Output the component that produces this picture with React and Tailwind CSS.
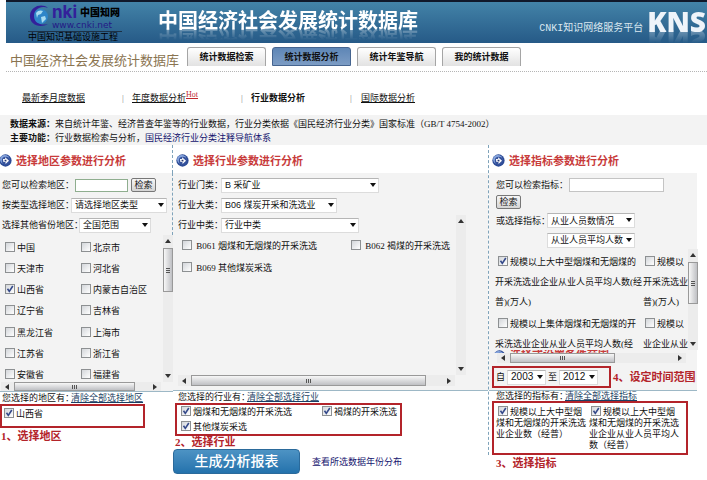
import React, { useState } from "react";

const regions = ["中国", "北京市", "天津市", "河北省", "山西省", "内蒙古自治区", "辽宁省", "吉林省", "黑龙江省", "上海市", "江苏省", "浙江省", "安徽省", "福建省"];

const tabs = ["统计数据检索", "统计数据分析", "统计年鉴导航", "我的统计数据"];

function Check({ label, checked = false, className = "" }) {
  const [on, setOn] = useState(checked);
  return (
    <label className={`whitespace-nowrap ${className}`}>
      <Box on={on} setOn={setOn} />
      {label}
    </label>
  );
}

function Box({ on, setOn }) {
  return (
    <span className="relative mr-[2px] inline-block size-[10px] align-[-1px]">
      <input
        type="checkbox"
        checked={on}
        onChange={() => setOn(!on)}
        className="block size-[10px] appearance-none border border-[#8d9092] bg-linear-to-br from-[#d3d6da] to-white"
      />
      {on && (
        <svg viewBox="0 0 10 10" className="pointer-events-none absolute inset-0 size-[10px]">
          <path d="M2.5 4.8 4.3 7.4 7.8 2" fill="none" stroke="#34498a" strokeWidth="1.6" />
        </svg>
      )}
    </span>
  );
}

// checkbox whose label wraps under the box
function WrapCheck({ label, checked = false, className = "" }) {
  const [on, setOn] = useState(checked);
  return (
    <label className={`block break-all ${className}`}>
      <Box on={on} setOn={setOn} />
      {label}
    </label>
  );
}

function Select({ label, options, className = "" }) {
  return (
    <span className={`relative inline-block h-[15px] ${className}`}>
      <select
        aria-label={label}
        className="block h-full w-full appearance-none border border-[#dcdcdc] border-t-[#b5b5b5] bg-white pl-[3px] font-['Liberation_Sans','Noto_Sans_CJK_SC',sans-serif] leading-[12px]"
      >
        {options.map((o) => (
          <option key={o}>{o}</option>
        ))}
      </select>
      <svg viewBox="0 0 6 4" className="pointer-events-none absolute top-[5px] right-[3px] h-1 w-[6px]">
        <path d="M0 0h6L3 4z" fill="#111" />
      </svg>
    </span>
  );
}

function Arrow({ d }) {
  return (
    <svg viewBox="0 0 6 6" className="size-[6px] shrink-0">
      <path d={d} fill="#333" />
    </svg>
  );
}

function VScroll({ thumb = "" }) {
  return (
    <div className="flex w-[10px] shrink-0 flex-col items-center bg-[#ececec] py-[3px]">
      <Arrow d="M3 1 6 5H0z" />
      {thumb && (
        <div className={`mt-1 flex w-[10px] flex-col items-center justify-center gap-px border border-[#999] bg-linear-to-r from-[#f7f7f7] to-[#bfc0c4] ${thumb}`}>
          <i className="h-px w-1 bg-[#555]" />
          <i className="h-px w-1 bg-[#555]" />
          <i className="h-px w-1 bg-[#555]" />
        </div>
      )}
      <div className="flex-1" />
      <Arrow d="M3 5 6 1H0z" />
    </div>
  );
}

function HScroll({ thumb, className = "" }) {
  return (
    <div className={`flex items-center bg-[#ececec] px-[3px] ${className}`}>
      <Arrow d="M1 3 5 0V6z" />
      <div className={`ml-1 flex h-full items-center justify-center gap-px border border-[#999] bg-linear-to-b from-[#f7f7f7] to-[#bfc0c4] ${thumb}`}>
        <i className="h-1 w-px bg-[#555]" />
        <i className="h-1 w-px bg-[#555]" />
        <i className="h-1 w-px bg-[#555]" />
      </div>
      <div className="flex-1" />
      <Arrow d="M5 3 1 0V6z" />
    </div>
  );
}

function Heading({ children }) {
  return (
    <h2 className="flex h-7 items-center gap-1 bg-white pt-[3px] pl-[3px] text-[11px] font-bold whitespace-nowrap text-[#c83b3b]">
      <Disc />
      {children}
    </h2>
  );
}

function Disc() {
  return (
    <svg viewBox="0 0 14 14" className="size-[13px] shrink-0">
      <circle cx="7" cy="7" r="6.6" fill="#2c4b96" />
      <circle cx="6.2" cy="6" r="5" fill="#86a4dc" />
      <circle cx="7.4" cy="7.4" r="4.4" fill="#35529c" />
      <path d="M4.2 5.4h2.4V3.4L10.8 7.2 7 10.8V8.6H4.8z" fill="#fff" />
      <path d="M6 6.2h2v1.8H6z" fill="#24366f" />
    </svg>
  );
}

function Button({ children }) {
  return (
    <button className="h-[14px] w-[25px] shrink-0 rounded-[2px] border border-[#777] bg-linear-to-b from-[#f6f6f6] to-[#d4d4d4] leading-[11px]">
      {children}
    </button>
  );
}

function Note({ children, className = "" }) {
  return <p className={`text-[11px] font-bold whitespace-nowrap text-[#b3242a] ${className}`}>{children}</p>;
}

function Logo() {
  return (
    <div className="ml-[22px] w-[94px] pt-[2px] text-black">
      <div className="flex">
        <svg viewBox="0 0 24 24" className="size-6">
          <circle cx="12.5" cy="12.5" r="7.5" fill="#2f86c9" />
          <path d="M8 9c2-3 5-3 7-2l-2 3-3 1-1 3zM13 13l4-1 1 3-4 4z" fill="#a9dcf1" />
          <path d="M20 4C14-1 3 2 2 11c-1 9 9 14 18 9-7 2-14-1-14-8C6 5 13 1 20 4z" fill="#33209a" />
        </svg>
        <div className="flex-1">
          <div className="flex h-[17px] items-center">
            <span className="font-[Inter,sans-serif] text-[17px] leading-[17px] font-bold text-[#33209a]">nki</span>
            <span className="ml-[3px] text-[10px] font-black whitespace-nowrap">中国知网</span>
          </div>
          <div className="font-['DejaVu_Sans',sans-serif] text-[9px] leading-[9px] text-[#241a86]">www.cnki.net</div>
        </div>
      </div>
      <div className="mt-px border-t border-[#1c3146] leading-[11px] whitespace-nowrap">中国知识基础设施工程</div>
    </div>
  );
}

export default function App() {
  return (
    <div className="bg-white pb-1 font-['Liberation_Serif','Noto_Sans_CJK_SC',serif] text-[9px] leading-[12px] text-[#111]">
      <header className="ml-[6px] flex h-[43px] items-start overflow-hidden border-t-2 border-[#10182a] bg-linear-to-b from-[#4383a8] to-[#265a87]">
        <Logo />
        <h1 className="mt-[9px] ml-[36px] text-[20px] leading-[20px] font-bold whitespace-nowrap text-white [-webkit-box-reflect:below_-4px_linear-gradient(transparent_35%,rgba(255,255,255,0.4))]">
          中国经济社会发展统计数据库
        </h1>
        <div className="ml-auto flex items-start whitespace-nowrap text-[#dbe8f0]">
          <span className="mt-[21px] font-['Liberation_Mono','Noto_Sans_CJK_SC',monospace] text-[10px] leading-[12px]">CNKI知识网络服务平台</span>
          <span className="mt-[8px] ml-1 pr-px font-['Open_Sans',sans-serif] text-[28px] leading-[22px] font-extrabold text-[#eef4fa] [-webkit-box-reflect:below_-2px_linear-gradient(transparent_40%,rgba(255,255,255,0.35))]">KNS</span>
        </div>
      </header>

      <nav className="ml-[6px] flex h-[29px] items-start gap-[6px] border-b border-dotted border-[#b5b5b5] pt-1 pl-1">
        <div className="mr-1 w-[167px] pt-[5px] text-[13px] leading-[18px] whitespace-nowrap text-[#8a7450]">中国经济社会发展统计数据库</div>
        {tabs.map((t, i) => (
          <button
            key={t}
            className={
              i === 1
                ? "h-[19px] w-[79px] rounded-t-[3px] border border-[#45648f] bg-linear-to-b from-[#5e86b6] to-[#7c9cc4] text-[9px] font-bold"
                : "h-[19px] w-[79px] rounded-t-[3px] border border-b-0 border-[#a5a5a5] bg-linear-to-b from-white to-[#e2e2e2] text-[9px] font-bold"
            }
          >
            {t}
          </button>
        ))}
      </nav>

      <div className="flex h-[43px] items-center pt-[9px] pl-[22px] whitespace-nowrap">
        <a href="#" className="w-[100px] underline">最新季月度数据</a>
        <span className="w-[10px] text-[#888]">|</span>
        <a href="#" className="w-[109px]">
          <span className="underline">年度数据分析</span>
          <sup className="text-[8px] text-[#c0272d] underline">Hot</sup>
        </a>
        <span className="w-[10px] text-[#888]">|</span>
        <a href="#" className="w-[99px] font-bold">行业数据分析</a>
        <span className="w-[11px] text-[#888]">|</span>
        <a href="#" className="underline">国际数据分析</a>
      </div>

      <div className="bg-[#f3f3f3] pt-[2px] pl-[10px] leading-[14px]">
        <p><b>数据来源：</b>来自统计年鉴、经济普查年鉴等的行业数据，行业分类依据《国民经济行业分类》国家标准（GB/T 4754-2002）</p>
        <p><b>主要功能：</b>行业数据检索与分析，<a href="#" className="text-[#14146e]">国民经济行业分类注释导航体系</a></p>
      </div>

      <main className="grid grid-cols-[173px_1fr_219px] items-start">
        {/* region */}
        <section>
          <div className="-ml-[4px] border-r border-dashed border-[#7fa3ba]"><Heading>选择地区参数进行分析</Heading></div>
          <div className="border-b border-[#9db8c6] bg-[#f3f3f3]">
            <div className="border-r border-dashed border-[#7fa3ba] pt-[2px] pl-[2px]">
              <div className="flex h-5 items-center whitespace-nowrap">
                <label htmlFor="region" className="w-[73px]">您可以检索地区：</label>
                <input id="region" className="mr-[3px] h-[13px] w-[53px] border border-[#8fae8f] bg-white" />
                <Button>检索</Button>
              </div>
              <div className="flex h-5 items-center whitespace-nowrap">
                <span className="mr-[-3px]">按类型选择地区：</span>
                <Select label="按类型选择地区" options={["请选择地区类型"]} className="w-[96px]" />
              </div>
              <div className="flex h-5 items-center whitespace-nowrap">
                <span className="mr-[-4px]">选择其他省份地区：</span>
                <Select label="选择其他省份地区" options={["全国范围"]} className="w-[72px]" />
              </div>
            </div>
            <div className="flex h-[147px]">
              <div className="flex-1">
                <div className="grid h-[151px] grid-cols-[76px_1fr] grid-rows-7 items-center pt-[2px] pl-[5px]">
                  {regions.map((r) => (
                    <Check key={r} label={r} checked={r === "山西省"} />
                  ))}
                </div>
              </div>
              <VScroll thumb="h-[44px]" />
            </div>
            <HScroll thumb="w-[121px]" className="mr-[12px] ml-[1px] h-[9px]" />
          </div>
          <div className="pl-[2px] whitespace-nowrap">您选择的地区有：<a href="#" className="-ml-[3px] text-[#1b3f63] underline">清除全部选择地区</a></div>
          <div className="mr-[28px] h-6 border-2 border-[#b3242a] pt-[2px] pl-[2px]">
            <Check label="山西省" checked />
          </div>
          <Note className="pt-[2px] pl-px">1、选择地区</Note>
        </section>

        {/* industry */}
        <section>
          <Heading>选择行业参数进行分析</Heading>
          <div className="border-b border-[#9db8c6] bg-[#f3f3f3] pt-[2px] pb-[4px] pl-[5px] whitespace-nowrap">
            <div className="flex h-5 items-center">
              <span className="w-[43px]">行业门类：</span>
              <Select label="行业门类" options={["B 采矿业"]} className="w-[158px]" />
            </div>
            <div className="flex h-5 items-center">
              <span className="w-[43px]">行业大类：</span>
              <Select label="行业大类" options={["B06 煤炭开采和洗选业"]} className="w-[116px]" />
            </div>
            <div className="mr-[22px] flex h-[160px]">
              <div className="flex-1">
                <div className="flex h-5 items-center">
                  <span className="w-[43px]">行业中类：</span>
                  <Select label="行业中类" options={["行业中类"]} className="w-[138px]" />
                </div>
                <div className="grid grid-cols-[169px_1fr] pl-1 leading-[22px]">
                  <Check label=" B061 烟煤和无烟煤的开采洗选" />
                  <Check label=" B062 褐煤的开采洗选" />
                  <Check label=" B069 其他煤炭采选" />
                </div>
              </div>
              <VScroll />
            </div>
            <HScroll thumb="w-[235px]" className="mr-[33px] h-[11px]" />
          </div>
          <div className="pl-[5px] whitespace-nowrap">您选择的行业有：<a href="#" className="-ml-[3px] text-[#1b3f63] underline">清除全部选择行业</a></div>
          <div className="mr-[86px] ml-[2px] grid h-[33px] grid-cols-[141px_1fr] border-2 border-[#b3242a] pl-1 leading-[14px]">
            <Check label="烟煤和无烟煤的开采洗选" checked />
            <Check label="褐煤的开采洗选" checked />
            <Check label="其他煤炭采选" checked />
          </div>
          <Note className="pl-[2px] leading-[13px]">2、选择行业</Note>
          <div className="flex items-center gap-[12px]">
            <button className="h-[25px] w-[127px] rounded-[4px] border border-[#2b6a9b] bg-linear-to-b from-[#4d93c4] to-[#2372ac] text-[14px] leading-[20px] font-medium text-white">生成分析报表</button>
            <a href="#" className="text-[#14146e]">查看所选数据年份分布</a>
          </div>
        </section>

        {/* indicator */}
        <section>
          <div className="border-l border-dashed border-[#7fa3ba]">
            <Heading>选择指标参数进行分析</Heading>
            <div className="mr-[10px] border-b border-[#9db8c6] bg-[#f3f3f3] pt-[2px] pb-[2px]">
              <div className="flex h-[19px] items-center pl-[7px] whitespace-nowrap">
                <label htmlFor="indicator" className="w-[73px]">您可以检索指标：</label>
                <input id="indicator" className="h-[14px] w-[95px] border border-[#c4c4c4] bg-white" />
              </div>
              <div className="flex h-4 items-center pl-[7px]"><Button>检索</Button></div>
              <div className="flex h-[21px] items-center pl-[7px] whitespace-nowrap">
                <span className="w-[51px]">或选择指标：</span>
                <Select label="或选择指标" options={["从业人员数情况"]} className="w-[88px]" />
              </div>
              <div className="flex h-[18px] items-center pl-[58px]">
                <Select label="指标分组" options={["从业人员平均人数"]} className="w-[88px]" />
              </div>
              <div className="flex h-[101px]">
                <div className="grid flex-1 grid-cols-[148px_1fr] content-start gap-y-[2px] pt-[3px] pl-[6px] leading-5">
                  <WrapCheck label="规模以上大中型烟煤和无烟煤的开采洗选业企业从业人员平均人数(经普)(万人)" checked className="indent-[3px]" />
                  <div className="whitespace-nowrap">
                    <Check label="规模以" className="ml-[2px]" />
                    <div>开采洗选业</div>
                    <div>普)(万人)</div>
                  </div>
                  <WrapCheck label="规模以上集体烟煤和无烟煤的开采洗选业企业从业人员平均人数(经" className="indent-[3px]" />
                  <div className="whitespace-nowrap">
                    <Check label="规模以" className="ml-[2px]" />
                    <div>业企业从业</div>
                  </div>
                </div>
                <VScroll thumb="h-[42px]" />
              </div>
              {/* next heading, mostly covered by the scroll pane */}
              <div className="flex h-[3px] items-start gap-1 overflow-hidden pl-[4px] text-[11px] leading-[11px] font-bold whitespace-nowrap text-[#c83b3b]">
                <Disc />
                选择或设置条件范围
              </div>
              <HScroll thumb="w-[105px]" className="mr-[11px] ml-2 h-[10px]" />
              <div className="mt-[3px] flex items-center gap-[2px] whitespace-nowrap">
                <div className="ml-[3px] flex h-[22px] w-[119px] items-center gap-[2px] border-2 border-[#b3242a] pl-[2px]">
                  <span>自</span>
                  <span className="text-[10px]"><Select label="起始年份" options={["2003"]} className="w-[39px] align-middle" /></span>
                  <span>至</span>
                  <span className="text-[10px]"><Select label="结束年份" options={["2012"]} className="w-[39px] align-middle" /></span>
                </div>
                <Note>4、设定时间范围</Note>
              </div>
            </div>
            <div className="pl-[7px] leading-[10px] whitespace-nowrap">您选择的指标有：<a href="#" className="-ml-[3px] text-[#1b3f63] underline">清除全部选择指标</a></div>
            <div className="mr-[19px] ml-[3px] grid h-[54px] grid-cols-[93px_92px] border-2 border-[#b3242a] pt-[3px] pl-[2px] leading-[11px]">
              <WrapCheck label="规模以上大中型烟煤和无烟煤的开采洗选业企业数（经普）" checked className="w-[91px] indent-[2px]" />
              <WrapCheck label="规模以上大中型烟煤和无烟煤的开采洗选业企业从业人员平均人数（经普）" checked className="w-[91px] indent-[2px]" />
            </div>
          </div>
          <Note className="pt-[2px] pl-2">3、选择指标</Note>
        </section>
      </main>
    </div>
  );
}
